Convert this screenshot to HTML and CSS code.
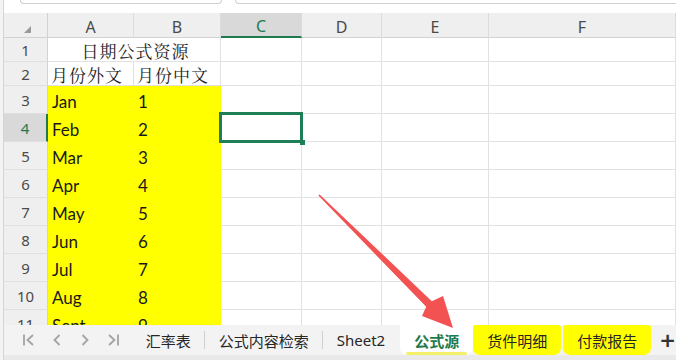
FILE: index.html
```html
<!DOCTYPE html>
<html lang="zh-CN">
<head>
    <meta charset="UTF-8">
    <title>公式源</title>
    <link rel="stylesheet" href="styles.css">
</head>
<body>
    <div class="app">
        <div class="topbar">
            <div class="box name-box"></div>
            <div class="box formula-box"></div>
        </div>

        <div class="sheet">
            <!-- column headers -->
            <div class="hd corner"><span class="tri"></span></div>
            <div class="hd col">A</div>
            <div class="hd col">B</div>
            <div class="hd col active">C</div>
            <div class="hd col">D</div>
            <div class="hd col">E</div>
            <div class="hd col">F</div>

            <!-- row 1 -->
            <div class="hd row">1</div>
            <div class="cell cn merged">日期公式资源</div>
            <div class="cell"></div>
            <div class="cell"></div>
            <div class="cell"></div>
            <div class="cell"></div>

            <!-- row 2 -->
            <div class="hd row">2</div>
            <div class="cell cn">月份外文</div>
            <div class="cell cn">月份中文</div>
            <div class="cell"></div>
            <div class="cell"></div>
            <div class="cell"></div>
            <div class="cell"></div>

            <div class="hd row">3</div>
            <div class="cell fill">Jan</div>
            <div class="cell fill">1</div>
            <div class="cell"></div>
            <div class="cell"></div>
            <div class="cell"></div>
            <div class="cell"></div>

            <div class="hd row active">4</div>
            <div class="cell fill">Feb</div>
            <div class="cell fill">2</div>
            <div class="cell selected"></div>
            <div class="cell"></div>
            <div class="cell"></div>
            <div class="cell"></div>

            <div class="hd row">5</div>
            <div class="cell fill">Mar</div>
            <div class="cell fill">3</div>
            <div class="cell"></div>
            <div class="cell"></div>
            <div class="cell"></div>
            <div class="cell"></div>

            <div class="hd row">6</div>
            <div class="cell fill">Apr</div>
            <div class="cell fill">4</div>
            <div class="cell"></div>
            <div class="cell"></div>
            <div class="cell"></div>
            <div class="cell"></div>

            <div class="hd row">7</div>
            <div class="cell fill">May</div>
            <div class="cell fill">5</div>
            <div class="cell"></div>
            <div class="cell"></div>
            <div class="cell"></div>
            <div class="cell"></div>

            <div class="hd row">8</div>
            <div class="cell fill">Jun</div>
            <div class="cell fill">6</div>
            <div class="cell"></div>
            <div class="cell"></div>
            <div class="cell"></div>
            <div class="cell"></div>

            <div class="hd row">9</div>
            <div class="cell fill">Jul</div>
            <div class="cell fill">7</div>
            <div class="cell"></div>
            <div class="cell"></div>
            <div class="cell"></div>
            <div class="cell"></div>

            <div class="hd row">10</div>
            <div class="cell fill">Aug</div>
            <div class="cell fill">8</div>
            <div class="cell"></div>
            <div class="cell"></div>
            <div class="cell"></div>
            <div class="cell"></div>

            <div class="hd row">11</div>
            <div class="cell fill">Sept</div>
            <div class="cell fill">9</div>
            <div class="cell"></div>
            <div class="cell"></div>
            <div class="cell"></div>
            <div class="cell"></div>
        </div>

        <div class="tabbar">
            <div class="nav">
                <svg width="14" height="14" viewBox="0 0 14 14"><path d="M2 1.5v11M11 2L5.5 7L11 12" fill="none" stroke="#a3a3a3" stroke-width="1.8"/></svg>
                <svg width="14" height="14" viewBox="0 0 14 14"><path d="M9.5 2L4.5 7L9.5 12" fill="none" stroke="#a3a3a3" stroke-width="1.8"/></svg>
                <svg width="14" height="14" viewBox="0 0 14 14"><path d="M4.5 2L9.5 7L4.5 12" fill="none" stroke="#a3a3a3" stroke-width="1.8"/></svg>
                <svg width="14" height="14" viewBox="0 0 14 14"><path d="M3 2L8.5 7L3 12M12 1.5v11" fill="none" stroke="#a3a3a3" stroke-width="1.8"/></svg>
            </div>
            <div class="tab sep">汇率表</div>
            <div class="tab sep">公式内容检索</div>
            <div class="tab sheet2">Sheet2</div>
            <div class="tab current">公式源</div>
            <div class="tab yellow">货件明细</div>
            <div class="tab yellow">付款报告</div>
            <div class="add">+</div>
        </div>
        <div class="status"></div>
    </div>

    <svg class="arrow" width="676" height="360" viewBox="0 0 676 360">
        <polygon points="319.6,194.4 431.8,301.2 443,296 453,328 422,316 426.2,306.8 318.4,195.6" fill="#f35252"/>
    </svg>
</body>
</html>
```

FILE: styles.css
```css
body {
    margin: 0;
    width: 676px;
    height: 360px;
    overflow: hidden;
    background-color: #f3f3f3;
    font-family: Lato, "Noto Sans", sans-serif;
    color: #1a1a1a;
}
.app {
    margin-left: 3px;
    border-left: 1px solid #d6d6d6;
    background-color: #ffffff;
}
.topbar {
    height: 13px;
    display: flex;
    gap: 13px;
    padding-left: 16px;
    background-color: #ffffff;
}
.box {
    height: 3px;
    border: 1px solid #cfcfcf;
    border-top: none;
    border-radius: 0 0 6px 6px;
}
.name-box {
    width: 200px;
}
.formula-box {
    flex: 1;
    border-right: none;
    border-radius: 0 0 0 6px;
}
.sheet {
    height: 312px;
    overflow: hidden;
    display: grid;
    grid-template-columns: 44px 86px 87px 81px 80px 107px 1fr;
    grid-template-rows: 25px 24px 24px repeat(9, 28px);
}
.hd {
    background-color: #efefef;
    color: #4a4a4a;
    font-family: "Noto Sans", sans-serif;
    font-size: 15px;
    display: flex;
    align-items: center;
    justify-content: center;
    box-sizing: border-box;
}
.hd.col {
    border-right: 1px solid #dcdcdc;
    border-bottom: 1px solid #d2d2d2;
    padding-top: 3px;
    font-size: 16px;
}
.hd.col.active {
    background-color: #d9d9d9;
    color: #1f7a50;
    border-bottom: 2px solid #1f7a50;
}
.hd.row {
    border-right: 1px solid #d2d2d2;
    border-bottom: 1px solid #e0e0e0;
}
.hd.row.active {
    background-color: #d9d9d9;
    color: #1f7a50;
    border-right: 2px solid #1f7a50;
}
.corner {
    border-right: 1px solid #d2d2d2;
    border-bottom: 1px solid #d2d2d2;
}
.tri {
    width: 0;
    height: 0;
    margin: 8px 0 0 4px;
    border-left: 7px solid transparent;
    border-bottom: 7px solid #9a9a9a;
}
.cell {
    box-sizing: border-box;
    border-right: 1px solid #e1e1e1;
    border-bottom: 1px solid #e1e1e1;
    font-size: 17px;
    display: flex;
    align-items: flex-end;
    padding: 0 0 3px 4px;
    line-height: 1;
    white-space: nowrap;
}
.cell.cn {
    font-family: "Noto Serif CJK SC", "Noto Sans CJK SC", serif;
    font-size: 17px;
    letter-spacing: 1px;
    color: #222;
    padding-bottom: 2px;
    padding-left: 3px;
}
.cell.merged {
    grid-column: span 2;
    justify-content: center;
}
.cell.fill {
    background-color: #ffff00;
    border-color: #ffff00;
}
.cell.selected {
    position: relative;
}
.cell.selected::after {
    content: "";
    position: absolute;
    left: -2px;
    top: -2px;
    right: -2px;
    bottom: -2px;
    border: 3px solid #1e7e56;
}
.cell.selected::before {
    content: "";
    position: absolute;
    right: -4px;
    bottom: -4px;
    width: 5px;
    height: 5px;
    background-color: #1e7e56;
    z-index: 1;
}
.tabbar {
    height: 30px;
    display: flex;
    align-items: stretch;
    background-color: #f3f3f3;
    font-family: "Noto Sans CJK SC", sans-serif;
    font-size: 15px;
    color: #262626;
}
.nav {
    width: 128px;
    display: flex;
    align-items: center;
    gap: 14px;
    padding-left: 18px;
    box-sizing: border-box;
}
.tab {
    display: flex;
    align-items: center;
    padding: 0 14px;
    white-space: nowrap;
}
.tab.sep {
    position: relative;
}
.tab.sep::after {
    content: "";
    position: absolute;
    right: 0;
    top: 6px;
    bottom: 6px;
    border-right: 1px solid #cfcfcf;
}
.tab.sheet2 {
    font-family: "Noto Sans", sans-serif;
    padding: 0 15px 0 14px;
}
.tab.current {
    background-color: #ffffff;
    color: #1e7a4c;
    font-weight: 700;
    border-radius: 0 0 7px 7px;
    position: relative;
}
.tab.current::after {
    content: "";
    position: absolute;
    left: 6px;
    right: 6px;
    bottom: 0;
    height: 3px;
    background-color: #f5f06a;
    border-radius: 2px;
}
.tab.yellow {
    background-color: #ffff00;
    border-radius: 3px 3px 7px 7px;
    margin-right: 2px;
}
.add {
    display: flex;
    align-items: center;
    padding-left: 6px;
    font-family: "DejaVu Sans", sans-serif;
    font-size: 20px;
    font-weight: 700;
    color: #333;
}
.status {
    height: 5px;
    background-color: #e9e9e9;
}
.arrow {
    position: absolute;
    left: 0;
    top: 0;
    pointer-events: none;
}
```
